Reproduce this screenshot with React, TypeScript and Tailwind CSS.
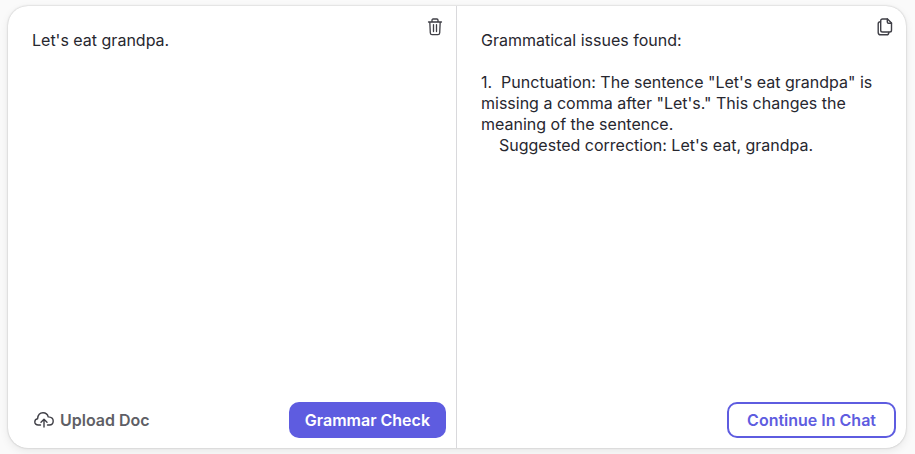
import { useState } from 'react'

const RESULT = `Grammatical issues found:

1.  Punctuation: The sentence "Let's eat grandpa" is missing a comma after "Let's." This changes the meaning of the sentence.
    Suggested correction: Let's eat, grandpa.`

function UploadIcon() {
  return (
    <svg width="20" height="20" viewBox="0 0 20 20" fill="none" stroke="#3f3f46" strokeWidth="1.4" strokeLinecap="round" strokeLinejoin="round">
      <path d="M6.500 15H4.200C2.200 15 .8 13.700.8 11.900c0-1.700 1.100-2.900 2.800-3.200C3.900 5.200 5.800 2.800 9 2.800c2.600 0 4.600 1.500 5.200 4.100 2.800.1 5 1.600 5 4.100 0 2.400-1.600 4-3.900 4H13.500" />
      <path d="M10 17V9.400M7 12.200L10 9.200l3 3" />
    </svg>
  )
}

function TrashIcon() {
  return (
    <svg width="16" height="18" viewBox="0 0 16 18" fill="none" stroke="#3f3f46" strokeWidth="1.3" strokeLinecap="round" strokeLinejoin="round">
      <path d="M1.500 4h13M5 4V2.200C5 1.500 5.400 1 6.100 1h3.800c.7 0 1.100.5 1.100 1.200V4M2.800 4l.5 11c.1 1 .7 1.700 1.700 1.700h6c1 0 1.600-.7 1.700-1.700l.5-11" />
      <path d="M6.500 6.600v7M9.500 6.600v7" />
    </svg>
  )
}

function CopyIcon() {
  return (
    <svg width="16" height="18" viewBox="0 0 16 18" fill="none" stroke="#3f3f46" strokeWidth="1.4" strokeLinecap="round" strokeLinejoin="round">
      <path d="M5.500 1h5l4 4v7.200c0 1-.7 1.800-1.800 1.800H5.500c-1.100 0-1.800-.8-1.800-1.800V2.800C3.700 1.800 4.400 1 5.500 1z" />
      <path d="M10.300 1v3c0 .8.500 1.300 1.300 1.300h2.900" />
      <path d="M3.500 3.800C2 3.800 1.200 4.600 1.200 5.800v8.600c0 1.500.9 2.400 2.400 2.400h6.200c1.200 0 2-.8 2-2.400" />
    </svg>
  )
}

export default function GrammarChecker() {
  const [text, setText] = useState("Let's eat grandpa.")

  return (
    <div className="min-h-screen flex bg-[#fafafa] pl-2 pr-[9px] py-1.5 font-['Inter',sans-serif] text-base text-[#27272f]">
      <main className="flex-1 grid grid-cols-2 bg-white rounded-[20px] shadow-[0_0_2px_rgba(0,0,0,0.25),0_3px_10px_rgba(0,0,0,0.08)]">
        {/* Input */}
        <section className="flex flex-col border-r border-[#d9d9dc]">
          <div className="flex-1 flex items-start">
            <textarea
              aria-label="Text to check"
              value={text}
              onChange={e => setText(e.target.value)}
              spellCheck={false}
              className="flex-1 min-w-0 self-stretch resize-none bg-transparent outline-none pl-6 pt-6 leading-[21px]"
            />
            <button aria-label="Clear text" className="mt-3 mr-[13px]" onClick={() => setText('')}>
              <TrashIcon />
            </button>
          </div>
          <footer className="flex items-center justify-between pl-6 pr-2.5 pb-2.5">
            <button className="flex items-center gap-1.5 h-9 pl-0.5 font-semibold text-[#5f5f66]">
              <UploadIcon />
              Upload Doc
            </button>
            <button className="h-9 px-4 rounded-[10px] bg-[#5e5ce0] font-semibold text-white">Grammar Check</button>
          </footer>
        </section>

        {/* Result */}
        <section className="flex flex-col">
          <div className="flex-1 flex items-start">
            <p className="flex-1 pl-6 pt-6 leading-[21px] whitespace-pre-wrap">{RESULT}</p>
            <button aria-label="Copy result" className="mt-3 mr-[13px]">
              <CopyIcon />
            </button>
          </div>
          <footer className="flex justify-end pr-2.5 pb-2.5">
            <button className="h-9 px-4.5 rounded-[10px] border-2 border-[#5e5ce0] font-semibold text-[#5e5ce0]">Continue In Chat</button>
          </footer>
        </section>
      </main>
    </div>
  )
}
